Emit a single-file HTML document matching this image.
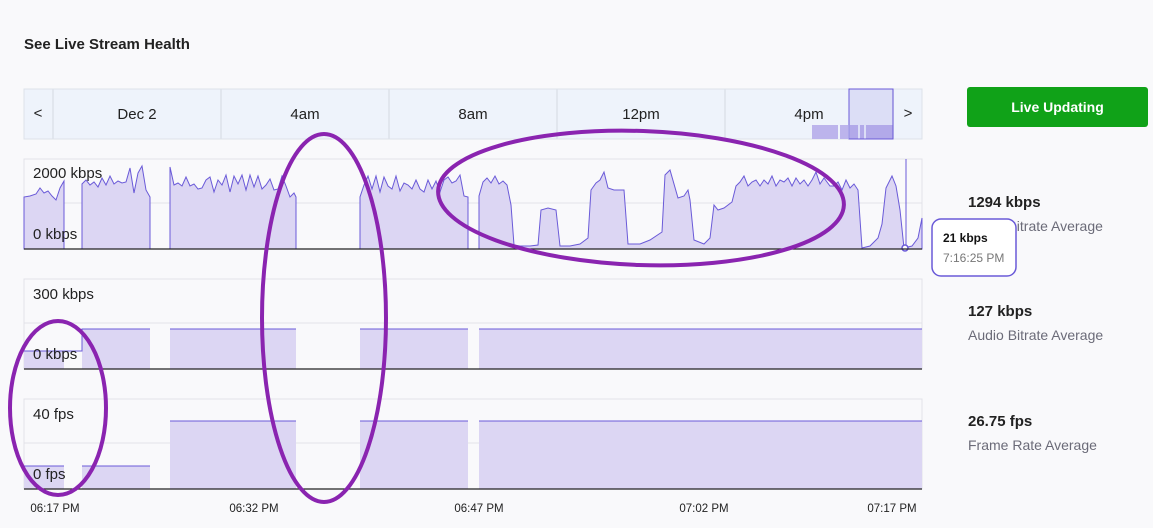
<!DOCTYPE html>
<html><head><meta charset="utf-8"><style>
body{margin:0;width:1153px;height:528px;background:#f9f9fb;font-family:"Liberation Sans",sans-serif;overflow:hidden;position:relative}
.t{position:absolute;white-space:nowrap}
</style></head><body>
<div class="t" style="left:24px;top:36px;font-size:15px;font-weight:bold;color:#222">See Live Stream Health</div>
<div style="position:absolute;left:967px;top:87px;width:181px;height:40px;background:#10a218;border-radius:3px;color:#fff;font-weight:bold;font-size:14px;text-align:center;line-height:40px">Live Updating</div>
<div class="t" style="left:968px;top:194px;font-size:15px;font-weight:bold;color:#222">1294 kbps</div>
<div class="t" style="left:968px;top:218px;font-size:14px;color:#6b6b78">Video Bitrate Average</div>
<div class="t" style="left:968px;top:303px;font-size:15px;font-weight:bold;color:#222">127 kbps</div>
<div class="t" style="left:968px;top:327px;font-size:14px;color:#6b6b78">Audio Bitrate Average</div>
<div class="t" style="left:968px;top:413px;font-size:15px;font-weight:bold;color:#222">26.75 fps</div>
<div class="t" style="left:968px;top:437px;font-size:14px;color:#6b6b78">Frame Rate Average</div>
<svg width="1153" height="528" style="position:absolute;left:0;top:0" font-family="Liberation Sans, sans-serif">
<rect x="24" y="89" width="898" height="50" fill="#eef3fb" stroke="#dde2ea"/>
<g stroke="#dde2ea" stroke-width="1.5"><line x1="53" y1="89" x2="53" y2="139"/><line x1="221" y1="89" x2="221" y2="139"/><line x1="389" y1="89" x2="389" y2="139"/><line x1="557" y1="89" x2="557" y2="139"/><line x1="725" y1="89" x2="725" y2="139"/><line x1="893" y1="89" x2="893" y2="139"/></g>
<g font-size="15" fill="#222" text-anchor="middle"><text x="38" y="118">&lt;</text><text x="137" y="119">Dec 2</text><text x="305" y="119">4am</text><text x="473" y="119">8am</text><text x="641" y="119">12pm</text><text x="809" y="119">4pm</text><text x="908" y="118">&gt;</text></g>
<rect x="812" y="125" width="81" height="14" fill="#bcb4ec"/>
<g fill="#eef3fb"><rect x="838" y="125" width="2" height="14"/><rect x="848" y="125" width="2" height="14"/><rect x="858" y="125" width="2" height="14"/><rect x="864" y="125" width="2" height="14"/></g>
<rect x="849" y="89" width="44" height="50" fill="rgba(120,110,220,0.15)" stroke="#6a5ad8"/>
<g fill="none" stroke="#e2e3e8"><rect x="24" y="159" width="898" height="90"/><line x1="24" y1="203" x2="922" y2="203"/><rect x="24" y="279" width="898" height="90"/><line x1="24" y1="323" x2="922" y2="323"/><rect x="24" y="399" width="898" height="90"/><line x1="24" y1="443" x2="922" y2="443"/></g>
<g fill="#dcd6f3" stroke="#6a5ad8" stroke-width="1">
<path d="M24 249V197L30 196 36 194 40 188 44 193 48 191 52 196 56 200 60 188 64 181V249Z"/>
<path d="M82 249V184L86 180 90 185 94 182 98 187 102 178 106 185 110 176 114 184 118 181 122 183 126 182 130 168 134 193 138 173 142 166 146 190 150 197V249Z"/>
<path d="M170 249V167L174 185 178 183 182 186 186 177 190 186 194 184 198 189 202 188 206 180 210 177 214 192 218 180 222 185 226 175 230 192 234 176 238 184 242 175 246 190 250 175 254 187 258 176 262 189 266 185 270 179 274 190 278 189 282 176 286 186 290 197 294 193 296 197V249Z"/>
<path d="M360 249V197L364 185 368 176 372 189 376 176 380 192 384 177 388 186 392 189 396 176 400 191 404 183 408 185 412 189 416 180 420 189 424 192 428 180 432 189 436 181 440 192 444 180 448 177 452 183 456 181 460 175 464 196 468 197V249Z"/>
<path d="M479 249V196L483 182 487 178 491 183 495 176 499 184 503 181 507 185 511 205 514 245 520 246 530 246 538 245 541 210 548 208 556 210 560 246 570 246 580 244 588 238 591 190 596 183 600 180 604 172 608 188 614 190 624 190 628 244 640 244 650 240 662 232 665 175 670 170 678 198 684 196 688 190 690 200 694 240 704 244 710 238 714 205 718 210 724 208 732 202 736 186 740 182 744 176 748 186 752 182 756 180 760 186 764 180 768 184 772 176 776 186 780 180 784 182 788 178 792 186 796 178 800 184 804 180 808 186 812 180 816 172 820 184 824 178 830 186 834 186 838 182 842 190 846 180 850 188 854 184 858 190 862 248 870 246 878 238 882 224 886 188 892 176 896 186 900 210 904 248 912 246 918 238 922 218V249Z"/>
</g>
<line x1="906" y1="159" x2="906" y2="249" stroke="#6a5ad8"/>
<circle cx="905" cy="248" r="3" fill="#fff" stroke="#6a5ad8" stroke-width="1.5"/>
<g fill="#dcd6f3">
<rect x="24" y="351" width="40" height="18"/><rect x="82" y="329" width="68" height="40"/><rect x="170" y="329" width="126" height="40"/><rect x="360" y="329" width="108" height="40"/><rect x="479" y="329" width="443" height="40"/>
<rect x="24" y="466" width="40" height="23"/><rect x="82" y="466" width="68" height="23"/><rect x="170" y="421" width="126" height="68"/><rect x="360" y="421" width="108" height="68"/><rect x="479" y="421" width="443" height="68"/>
</g>
<g fill="none" stroke="#6a5ad8" stroke-width="1">
<path d="M24 351H82V329H150M170 329H296M360 329H468M479 329H922"/>
<path d="M24 466H64M82 466H150M170 421H296M360 421H468M479 421H922"/>
</g>
<g stroke="#222" stroke-width="1.2"><line x1="24" y1="249" x2="922" y2="249"/><line x1="24" y1="369" x2="922" y2="369"/><line x1="24" y1="489" x2="922" y2="489"/></g>
<g font-size="15" fill="#222"><text x="33" y="178">2000 kbps</text><text x="33" y="239">0 kbps</text><text x="33" y="299">300 kbps</text><text x="33" y="359">0 kbps</text><text x="33" y="419">40 fps</text><text x="33" y="479">0 fps</text></g>
<g font-size="11.5" fill="#222" text-anchor="middle"><text x="55" y="512">06:17 PM</text><text x="254" y="512">06:32 PM</text><text x="479" y="512">06:47 PM</text><text x="704" y="512">07:02 PM</text><text x="892" y="512">07:17 PM</text></g>
<rect x="932" y="219" width="84" height="57" rx="9" fill="#fff" stroke="#6a5ad8" stroke-width="1.5"/>
<text x="943" y="242" font-size="12" font-weight="bold" fill="#111">21 kbps</text>
<text x="943" y="262" font-size="12" fill="#777">7:16:25 PM</text>
<g fill="none" stroke="#8a24b0" stroke-width="4">
<ellipse cx="324" cy="318" rx="62" ry="184"/>
<ellipse cx="641" cy="198" rx="203" ry="67" transform="rotate(2 641 198)"/>
<ellipse cx="58" cy="408" rx="48" ry="87"/>
</g>
</svg>
</body></html>
